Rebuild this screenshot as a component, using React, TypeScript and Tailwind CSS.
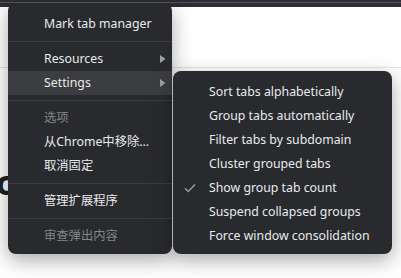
import React from 'react';

const font = { fontFamily: '"Noto Sans", "Noto Sans CJK SC", sans-serif' };

const Arrow = () => (
  <svg width="6" height="8" viewBox="0 0 6 8" className="absolute right-[6px] top-1/2 -translate-y-1/2">
    <path d="M0 0 L5.5 4 L0 8 Z" fill="#9aa0a6" />
  </svg>
);

const Sep = () => <div className="my-[5px] h-px bg-[#3c3d40]" />;

const Item = ({
  children,
  dim,
  sub,
  active,
  checked,
}: {
  children: React.ReactNode;
  dim?: boolean;
  sub?: boolean;
  active?: boolean;
  checked?: boolean;
}) => (
  <div
    className={`relative flex h-6 items-center pl-9 pr-4 text-[12.3px] whitespace-nowrap ${
      dim ? 'text-[#80868b]' : 'text-[#e8eaed]'
    } ${active ? 'bg-[#3c3d40]' : ''}`}
  >
    {checked && (
      <svg width="12" height="10" viewBox="0 0 12 10" className="absolute left-[11px] top-1/2 -translate-y-1/2">
        <path d="M1 5.2 L4.2 8.4 L11 1.4" fill="none" stroke="#9aa0a6" strokeWidth="1.4" />
      </svg>
    )}
    {children}
    {sub && <Arrow />}
  </div>
);

export default function App() {
  return (
    <div className="relative h-[278px] w-[401px] overflow-hidden bg-white" style={font}>
      <div className="flex h-[7px] flex-col bg-[#2d2e31]">
        <div className="mt-[2px] h-px bg-[#55575b]" />
      </div>
      <div className="mt-[60px] h-px bg-[#e6e6e6]" />
      <div className="-ml-[4px] pt-[97px] text-[34px] font-bold leading-none text-[#202124]">c</div>

      <div className="absolute left-[8px] top-[3px] w-[164px] rounded-[8px] bg-[#292a2d] pt-[9px] pb-[6px] shadow-[0_6px_20px_rgba(0,0,0,0.35)]">
        <Item>Mark tab manager</Item>
        <Sep />
        <Item sub>Resources</Item>
        <Item sub active>Settings</Item>
        <Sep />
        <Item dim>选项</Item>
        <Item>从Chrome中移除...</Item>
        <Item>取消固定</Item>
        <Sep />
        <Item>管理扩展程序</Item>
        <Sep />
        <Item dim>审查弹出内容</Item>
      </div>

      <div className="absolute left-[173px] top-[71px] w-[219px] rounded-[8px] bg-[#292a2d] pt-[9px] pb-[6px] shadow-[0_6px_20px_rgba(0,0,0,0.35)]">
        <Item>Sort tabs alphabetically</Item>
        <Item>Group tabs automatically</Item>
        <Item>Filter tabs by subdomain</Item>
        <Item>Cluster grouped tabs</Item>
        <Item checked>Show group tab count</Item>
        <Item>Suspend collapsed groups</Item>
        <Item>Force window consolidation</Item>
      </div>
    </div>
  );
}
